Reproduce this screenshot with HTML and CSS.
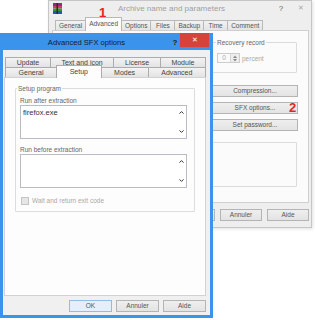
FILE: index.html
```html
<!DOCTYPE html>
<html>
<head>
<meta charset="utf-8">
<link rel="stylesheet" href="styles.css">
</head>
<body>
<div class="desk">

  <div class="win back">
    <div class="tb">
      <svg class="appico" width="9" height="11" viewBox="0 0 9 11">
        <rect x="0" y="0" width="9" height="3" fill="#8a2a8c"/>
        <rect x="0" y="3" width="9" height="2.5" fill="#d23a6a"/>
        <rect x="0" y="5.5" width="9" height="2.5" fill="#2f9a3c"/>
        <rect x="0" y="8" width="9" height="3" fill="#2a55b8"/>
        <rect x="3.5" y="0" width="1.5" height="11" fill="#3a2a10"/>
      </svg>
      <div class="title">Archive name and parameters</div>
      <div class="tbtn">?</div>
      <div class="tbtn x">✕</div>
    </div>
    <div class="tabs">
      <div class="tab">General</div>
      <div class="tab active">Advanced</div>
      <div class="tab">Options</div>
      <div class="tab">Files</div>
      <div class="tab">Backup</div>
      <div class="tab">Time</div>
      <div class="tab">Comment</div>
    </div>
    <div class="panel">
      <div class="col">
        <div class="group rec">
          <span class="legend">Recovery record</span>
          <div class="spinrow">
            <div class="spin">
              <span class="spinval">0</span>
              <div class="spinbtns">
                <svg width="4" height="3" viewBox="0 0 4 3"><path d="M0 3 L2 0.5 L4 3 Z" fill="#8a8a8a"/></svg>
                <svg width="4" height="3" viewBox="0 0 4 3"><path d="M0 0 L2 2.5 L4 0 Z" fill="#8a8a8a"/></svg>
              </div>
            </div>
            <span class="dim">percent</span>
          </div>
        </div>
        <div class="btn b1">Compression...</div>
        <div class="btn b2">SFX options...</div>
        <div class="btn b2">Set password...</div>
        <div class="group low"></div>
      </div>
    </div>
    <div class="btnrow">
      <div class="btn wb">OK</div>
      <div class="btn wb">Annuler</div>
      <div class="btn wb">Aide</div>
    </div>
  </div>

  <div class="win front">
    <div class="ftb">
      <div class="ftitle">Advanced SFX options</div>
      <div class="fhelp">?</div>
      <div class="fclose">✕</div>
    </div>
    <div class="client">
      <div class="trow">
        <div class="ftab">Update</div>
        <div class="ftab">Text and icon</div>
        <div class="ftab">License</div>
        <div class="ftab">Module</div>
      </div>
      <div class="trow">
        <div class="ftab">General</div>
        <div class="ftab active">Setup</div>
        <div class="ftab">Modes</div>
        <div class="ftab">Advanced</div>
      </div>
      <div class="fpanel">
        <div class="group setup">
          <span class="legend fl">Setup program</span>
          <div class="lbl l1">Run after extraction</div>
          <div class="ta">
            <div class="tatext">firefox.exe</div>
            <div class="sb">
              <svg width="5" height="3" viewBox="0 0 5 3"><path d="M0.5 2.6 L2.5 0.6 L4.5 2.6" fill="none" stroke="#333" stroke-width="1"/></svg>
              <svg width="5" height="3" viewBox="0 0 5 3"><path d="M0.5 0.4 L2.5 2.4 L4.5 0.4" fill="none" stroke="#333" stroke-width="1"/></svg>
            </div>
          </div>
          <div class="lbl l2">Run before extraction</div>
          <div class="ta">
            <div class="tatext"></div>
            <div class="sb">
              <svg width="5" height="3" viewBox="0 0 5 3"><path d="M0.5 2.6 L2.5 0.6 L4.5 2.6" fill="none" stroke="#333" stroke-width="1"/></svg>
              <svg width="5" height="3" viewBox="0 0 5 3"><path d="M0.5 0.4 L2.5 2.4 L4.5 0.4" fill="none" stroke="#333" stroke-width="1"/></svg>
            </div>
          </div>
          <div class="chkrow">
            <span class="chk"></span>
            <span class="dim">Wait and return exit code</span>
          </div>
        </div>
      </div>
      <div class="fbtnrow">
        <div class="btn fb def">OK</div>
        <div class="btn fb">Annuler</div>
        <div class="btn fb">Aide</div>
      </div>
    </div>
  </div>

  <span class="mark m1">1</span>
  <span class="mark m2">2</span>
  <span class="mark m3">3</span>
</div>
</body>
</html>
```

FILE: styles.css
```css
body {
  margin: 0;
  background: #ffffff;
  font-family: "Liberation Sans", Arial, sans-serif;
  color: #4a4a4a;
}

.desk {
  position: relative;
  width: 315px;
  height: 320px;
  overflow: hidden;
}

.win {
  position: absolute;
  box-sizing: border-box;
  display: flex;
  flex-direction: column;
}

/* ---------- back window ---------- */
.back {
  left: 48px;
  top: 0;
  width: 264px;
  height: 228px;
  background: #eeeeee;
  border: 1px solid #c6c6c6;
  padding: 0 2px 0 3px;
  box-shadow: 1px 1px 3px rgba(0, 0, 0, 0.12);
}

.tb {
  height: 14px;
  display: flex;
  align-items: center;
}

.appico {
  margin-left: 1px;
  flex: none;
}

.title {
  flex: 1;
  text-align: center;
  font-size: 8px;
  color: #a0a0a0;
  padding-left: 8px;
}

.tbtn {
  width: 16px;
  text-align: center;
  font-size: 8px;
  color: #666;
}

.tbtn.x {
  margin-left: 4px;
  color: #aaa;
  font-size: 7px;
}

.tabs {
  margin-top: 2px;
  height: 13px;
  display: flex;
  align-items: flex-end;
  padding-left: 3px;
}

.tab {
  height: 10px;
  box-sizing: border-box;
  min-width: 25px;
  padding: 0 3px;
  border: 1px solid #b8b8b8;
  border-bottom: none;
  margin-right: -1px;
  background: linear-gradient(#f2f2f2, #e4e4e4);
  font-size: 6.5px;
  line-height: 9px;
  text-align: center;
  color: #555;
}

.tab.active {
  height: 14px;
  margin-bottom: -1px;
  background: #fbfbfb;
  position: relative;
  z-index: 1;
  line-height: 12px;
}

.panel {
  height: 173px;
  box-sizing: border-box;
  border: 1px solid #d0d0d0;
  background: #fbfbfb;
  display: flex;
  justify-content: flex-end;
  padding: 11px 10px 0 0;
}

.col {
  width: 86px;
  display: flex;
  flex-direction: column;
}

.group {
  box-sizing: border-box;
  border: 1px solid #dcdcdc;
  border-radius: 1px;
}

.legend {
  display: block;
  width: max-content;
  margin: -4px 0 0 -1px;
  padding: 0 1px;
  background: #fbfbfb;
  font-size: 6.5px;
  line-height: 7px;
  color: #666;
}

.rec {
  width: 85px;
  height: 31px;
  padding-left: 4px;
}

.spinrow {
  margin-top: 7px;
  display: flex;
  align-items: center;
  gap: 2px;
  font-size: 6.5px;
}

.spin {
  width: 23px;
  height: 10px;
  box-sizing: border-box;
  border: 1px solid #cdcdcd;
  background: #fafafa;
  display: flex;
}

.spinval {
  flex: 1;
  text-align: center;
  line-height: 8px;
  color: #aaa;
  font-size: 6.5px;
}

.spinbtns {
  width: 8px;
  border-left: 1px solid #d6d6d6;
  display: flex;
  flex-direction: column;
  align-items: center;
  justify-content: space-around;
  background: #eeeeee;
}

.dim {
  color: #a8a8a8;
  font-size: 6.5px;
}

.btn {
  box-sizing: border-box;
  height: 12px;
  border: 1px solid #b4b4b4;
  background: linear-gradient(#efefef, #e3e3e3);
  font-size: 6.5px;
  line-height: 10px;
  text-align: center;
  color: #555;
}

.b1 { margin-top: 12px; }
.b2 { margin-top: 5px; }

.low {
  margin-top: 11px;
  width: 85px;
  height: 45px;
}

.btnrow {
  margin-top: 6px;
  display: flex;
  justify-content: flex-end;
  gap: 5px;
}

.wb { width: 42px; }

/* ---------- front window ---------- */
.front {
  left: 0;
  top: 33px;
  width: 213px;
  height: 285px;
  background: #3a94ec;
  padding: 0 3px 3px;
}

.ftb {
  height: 17px;
  display: flex;
  align-items: flex-start;
}

.ftitle {
  flex: 1;
  text-align: center;
  font-size: 7.6px;
  line-height: 19px;
  color: #1a1a1a;
}

.fhelp {
  width: 10px;
  text-align: center;
  font-size: 8px;
  font-weight: bold;
  line-height: 19px;
  color: #1a1a1a;
}

.fclose {
  width: 29px;
  height: 14px;
  margin-right: 1px;
  background: #d7423c;
  color: #fff;
  font-size: 7px;
  line-height: 14px;
  text-align: center;
}

.client {
  flex: 1;
  background: #f0f0f0;
  padding: 7px 4px 0 1px;
  display: flex;
  flex-direction: column;
}

.trow {
  display: flex;
  height: 10px;
  margin: 0 1px;
}

.ftab {
  flex: 1 1 auto;
  box-sizing: border-box;
  border: 1px solid #acacac;
  border-bottom: none;
  margin-right: -1px;
  background: linear-gradient(#f3f3f3, #e3e3e3);
  font-size: 7px;
  line-height: 9px;
  text-align: center;
  color: #444;
}

.ftab.active {
  margin-top: -2px;
  margin-bottom: -1px;
  height: 13px;
  background: #fdfdfd;
  position: relative;
  z-index: 1;
  line-height: 12px;
}

.fpanel {
  height: 219px;
  box-sizing: border-box;
  border: 1px solid #d2d2d2;
  background: #fdfdfd;
  padding: 10px 0 0 10px;
}

.setup {
  width: 180px;
  height: 124px;
  padding-left: 4px;
}

.fl {
  margin-left: -3px;
  background: #fdfdfd;
}

.lbl {
  font-size: 6.5px;
  line-height: 7px;
  color: #666;
}

.l1 { margin-top: 5px; }
.l2 { margin-top: 7px; }

.ta {
  margin-top: 1px;
  width: 167px;
  height: 34px;
  box-sizing: border-box;
  border: 1px solid #b9bcc4;
  background: #ffffff;
  display: flex;
}

.tatext {
  flex: 1;
  padding: 2px 2px;
  font-size: 7.5px;
  line-height: 9px;
  color: #333;
}

.sb {
  width: 9px;
  display: flex;
  flex-direction: column;
  align-items: center;
  justify-content: space-between;
  padding: 5px 0 5px;
}

.chkrow {
  margin-top: 9px;
  display: flex;
  align-items: center;
  gap: 3px;
  height: 7px;
  padding-left: 1px;
}

.chk {
  width: 6px;
  height: 6px;
  border: 1px solid #c4c4c4;
  background: #e6e6e6;
}

.fbtnrow {
  margin-top: 4px;
  display: flex;
  justify-content: flex-end;
  gap: 4px;
}

.fb { width: 43px; }

.def {
  border-color: #8fbdea;
  background: #e4effb;
}

/* ---------- annotations ---------- */
.mark {
  position: absolute;
  color: #e42525;
  font-size: 13px;
  font-weight: bold;
  line-height: 13px;
  font-family: "Liberation Sans", Arial, sans-serif;
}

.m1 { left: 99px; top: 6px; }
.m2 { left: 289px; top: 101px; }
.m3 { left: 88px; top: 66px; }
```
